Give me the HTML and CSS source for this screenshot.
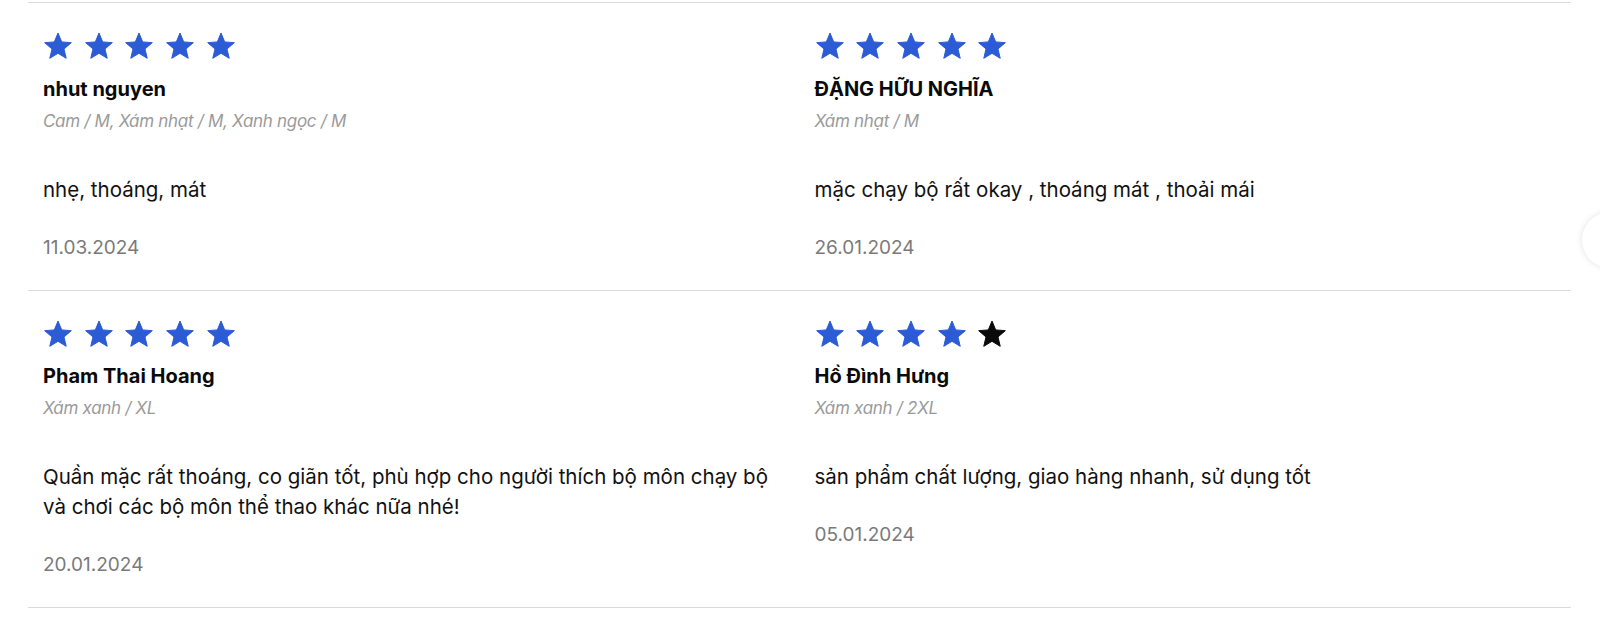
FILE: index.html
```html
<!DOCTYPE html>
<html lang="vi">
<head>
<meta charset="utf-8">
<title>Reviews</title>
<link rel="stylesheet" href="styles.css">
</head>
<body>
<svg width="0" height="0" class="defs">
  <defs>
    <path id="star" d="M0,-14 L3.703,-5.097 L13.315,-4.326 L5.992,1.947 L8.229,11.326 L0,6.3 L-8.229,11.326 L-5.992,1.947 L-13.315,-4.326 L-3.703,-5.097 Z"/>
  </defs>
</svg>
<div class="reviews">
  <div class="review">
    <div class="stars">
      <svg class="star on" viewBox="-15 -15 30 27.5"><use href="#star"/></svg>
      <svg class="star on" viewBox="-15 -15 30 27.5"><use href="#star"/></svg>
      <svg class="star on" viewBox="-15 -15 30 27.5"><use href="#star"/></svg>
      <svg class="star on" viewBox="-15 -15 30 27.5"><use href="#star"/></svg>
      <svg class="star on" viewBox="-15 -15 30 27.5"><use href="#star"/></svg>
    </div>
    <div class="name">nhut nguyen</div>
    <div class="variant">Cam / M, Xám nhạt / M, Xanh ngọc / M</div>
    <p class="text">nhẹ, thoáng, mát</p>
    <div class="date">11.03.2024</div>
  </div>
  <div class="review">
    <div class="stars">
      <svg class="star on" viewBox="-15 -15 30 27.5"><use href="#star"/></svg>
      <svg class="star on" viewBox="-15 -15 30 27.5"><use href="#star"/></svg>
      <svg class="star on" viewBox="-15 -15 30 27.5"><use href="#star"/></svg>
      <svg class="star on" viewBox="-15 -15 30 27.5"><use href="#star"/></svg>
      <svg class="star on" viewBox="-15 -15 30 27.5"><use href="#star"/></svg>
    </div>
    <div class="name">ĐẶNG HỮU NGHĨA</div>
    <div class="variant">Xám nhạt / M</div>
    <p class="text">mặc chạy bộ rất okay , thoáng mát , thoải mái</p>
    <div class="date">26.01.2024</div>
  </div>
  <div class="review">
    <div class="stars">
      <svg class="star on" viewBox="-15 -15 30 27.5"><use href="#star"/></svg>
      <svg class="star on" viewBox="-15 -15 30 27.5"><use href="#star"/></svg>
      <svg class="star on" viewBox="-15 -15 30 27.5"><use href="#star"/></svg>
      <svg class="star on" viewBox="-15 -15 30 27.5"><use href="#star"/></svg>
      <svg class="star on" viewBox="-15 -15 30 27.5"><use href="#star"/></svg>
    </div>
    <div class="name">Pham Thai Hoang</div>
    <div class="variant">Xám xanh / XL</div>
    <p class="text">Quần mặc rất thoáng, co giãn tốt, phù hợp cho người thích bộ môn chạy bộ và chơi các bộ môn thể thao khác nữa nhé!</p>
    <div class="date">20.01.2024</div>
  </div>
  <div class="review">
    <div class="stars">
      <svg class="star on" viewBox="-15 -15 30 27.5"><use href="#star"/></svg>
      <svg class="star on" viewBox="-15 -15 30 27.5"><use href="#star"/></svg>
      <svg class="star on" viewBox="-15 -15 30 27.5"><use href="#star"/></svg>
      <svg class="star on" viewBox="-15 -15 30 27.5"><use href="#star"/></svg>
      <svg class="star off" viewBox="-15 -15 30 27.5"><use href="#star"/></svg>
    </div>
    <div class="name">Hồ Đình Hưng</div>
    <div class="variant">Xám xanh / 2XL</div>
    <p class="text">sản phẩm chất lượng, giao hàng nhanh, sử dụng tốt</p>
    <div class="date">05.01.2024</div>
  </div>
</div>
<div class="float-btn"></div>
</body>
</html>
```
FILE: styles.css
```css
html, body {
  margin: 0;
  padding: 0;
  background: #ffffff;
}
body {
  font-family: Inter, "Noto Sans", "Liberation Sans", sans-serif;
  color: #111111;
  overflow: hidden;
  position: relative;
  height: 618px;
}
.defs {
  position: absolute;
}
.reviews {
  margin: 2px 29px 0 28px;
  display: grid;
  grid-template-columns: 1fr 1fr;
  border-bottom: 1px solid #dadada;
}
.review {
  border-top: 1px solid #dadada;
  padding: 29px 15px 30px;
  display: flex;
  flex-direction: column;
}
.stars {
  display: flex;
  gap: 10.7px;
  height: 27.5px;
}
.star {
  width: 30px;
  height: 27.5px;
  display: block;
}
.star.on {
  fill: #2c5bd6;
  stroke: #2c5bd6;
  stroke-width: 1;
  stroke-linejoin: round;
}
.star.off {
  fill: #0a0a0a;
  stroke: #0a0a0a;
  stroke-width: 1;
  stroke-linejoin: round;
}
.name {
  margin-top: 17px;
  font-size: 20px;
  line-height: 24px;
  font-weight: 700;
  letter-spacing: 0;
  color: #0a0a0a;
}
.variant {
  margin-top: 8px;
  font-size: 17px;
  line-height: 24px;
  font-style: italic;
  color: #9a9a9a;
  letter-spacing: -0.3px;
}
.text {
  margin: 42px 0 0;
  font-size: 20.5px;
  line-height: 30px;
  color: #111111;
}
.date {
  margin-top: 31px;
  font-size: 19px;
  line-height: 24px;
  color: #7a7a7a;
}
.float-btn {
  position: absolute;
  right: -38px;
  top: 212px;
  width: 56px;
  height: 56px;
  border-radius: 50%;
  background: #ffffff;
  box-shadow: 0 0 6px rgba(0, 0, 0, 0.12);
}
```
